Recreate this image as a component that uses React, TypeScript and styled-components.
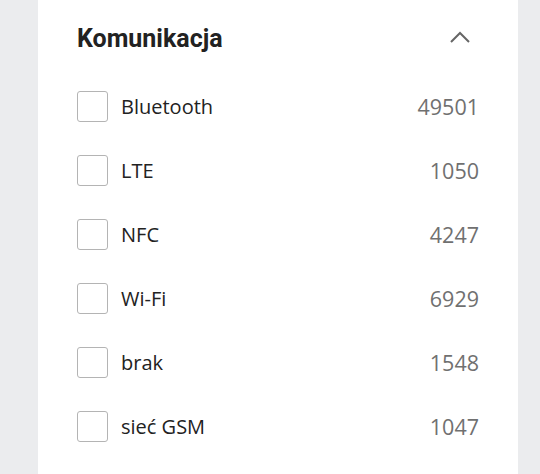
import React from "react";
import styled, { createGlobalStyle } from "styled-components";

const Global = createGlobalStyle`
  html, body { margin: 0; padding: 0; background: #ebecee; }
  body { font-family: "Open Sans", sans-serif; }
`;

const Page = styled.div`
  display: flex;
  justify-content: flex-start;
  padding-left: 38px;
  min-height: 474px;
`;

const Panel = styled.section`
  width: 480px;
  background: #ffffff;
  padding: 0 39px 0 39px;
  box-sizing: border-box;
  min-height: 474px;
`;

const Header = styled.div`
  height: 71px;
  padding-top: 3px;
  display: flex;
  align-items: center;
  justify-content: space-between;
`;

const Title = styled.h2`
  margin: 0;
  font-family: Roboto, "Open Sans", sans-serif;
  font-weight: 700;
  font-size: 25px;
  color: #222222;
  letter-spacing: 0;
`;

const Chevron = styled.svg`
  width: 22px;
  height: 14px;
  margin-right: 8px;
  margin-bottom: 4px;
  color: #666666;
`;

const List = styled.ul`
  list-style: none;
  margin: 0;
  padding: 0;
`;

const Row = styled.li`
  height: 64px;
  display: flex;
  align-items: center;
`;

const Box = styled.span`
  width: 29px;
  height: 29px;
  border: 1px solid #b4b4b4;
  border-radius: 3px;
  flex: none;
  background: #fff;
`;

const Label = styled.span`
  margin-left: 13px;
  flex: 1;
  font-size: 20px;
  color: #222222;
`;

const Count = styled.span`
  font-size: 21.5px;
  color: #707070;
`;

const items: [string, number][] = [
  ["Bluetooth", 49501],
  ["LTE", 1050],
  ["NFC", 4247],
  ["Wi-Fi", 6929],
  ["brak", 1548],
  ["sieć GSM", 1047],
];

export default function App() {
  return (
    <>
      <Global />
      <Page>
        <Panel>
          <Header>
            <Title>Komunikacja</Title>
            <Chevron viewBox="0 0 22 14" fill="none">
              <path d="M2 12 L11 3 L20 12" stroke="currentColor" strokeWidth="2" />
            </Chevron>
          </Header>
          <List>
            {items.map(([name, n]) => (
              <Row key={name}>
                <Box />
                <Label>{name}</Label>
                <Count>{n}</Count>
              </Row>
            ))}
          </List>
        </Panel>
      </Page>
    </>
  );
}
